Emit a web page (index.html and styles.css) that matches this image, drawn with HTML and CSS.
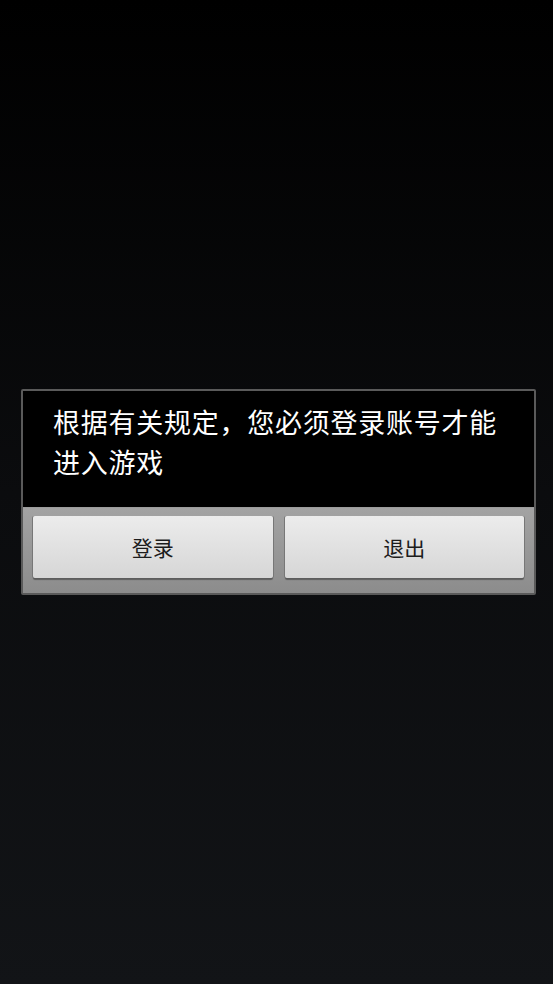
FILE: index.html
```html
<!DOCTYPE html>
<html lang="zh">
<head>
<meta charset="utf-8">
<link rel="stylesheet" href="styles.css">
</head>
<body>
<div class="screen">
  <div class="dialog">
    <div class="message">根据有关规定，您必须登录账号才能进入游戏</div>
    <div class="actions">
      <button class="btn">登录</button>
      <button class="btn">退出</button>
    </div>
  </div>
</div>
</body>
</html>
```
FILE: styles.css
```css
html, body {
  margin: 0;
  padding: 0;
  height: 100%;
}
body {
  background: linear-gradient(to bottom, #000000 0%, #0b0c0e 50%, #121417 100%);
  font-family: "Noto Sans CJK SC", "Noto Sans", sans-serif;
}
.screen {
  height: 984px;
  display: flex;
  flex-direction: column;
  padding-top: 389px;
  padding-left: 21px;
  box-sizing: border-box;
  align-items: flex-start;
}
.dialog {
  width: 515px;
  box-sizing: border-box;
  border: 2px solid #5a5a5a;
  border-radius: 2px;
  background: #000;
}
.message {
  color: #fff;
  font-size: 27px;
  line-height: 40px;
  padding: 11px 20px 17px 30px;
  height: 116px;
  box-sizing: border-box;
  letter-spacing: 0.75px;
}
.actions {
  background: linear-gradient(to bottom, #a3a3a3, #8c8c8c);
  display: flex;
  gap: 12px;
  padding: 8px 10px 15px 10px;
  border-top: 1px solid #9c9c9c;
}
.btn {
  flex: 1;
  height: 62px;
  border: none;
  border-radius: 2px;
  background: linear-gradient(to bottom, #ececec, #d6d6d6);
  box-shadow: 0 1px 0 #5c5c5c, 1px 0 0 #777, -1px 0 0 #777, 0 2px 1px rgba(0,0,0,0.35);
  color: #1c1c1c;
  font-family: "Noto Sans CJK SC", "Noto Sans", sans-serif;
  font-size: 21px;
  padding: 0;
}
```
